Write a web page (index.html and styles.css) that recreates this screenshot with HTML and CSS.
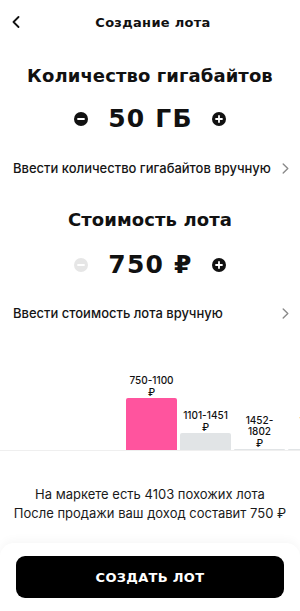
FILE: index.html
```html
<!DOCTYPE html>
<html lang="ru">
<head>
<meta charset="utf-8">
<link rel="stylesheet" href="styles.css">
</head>
<body>
<div class="screen">
  <header class="header">
    <button class="back" aria-label="Назад">
      <svg width="8" height="12" viewBox="0 0 8 12"><path d="M6.5 1 L1.5 6 L6.5 11" fill="none" stroke="#111" stroke-width="1.8" stroke-linecap="round" stroke-linejoin="round"/></svg>
    </button>
    <h1 class="title">Создание лота</h1>
    <span></span>
  </header>

  <h2 class="section-title first">Количество гигабайтов</h2>
  <div class="stepper">
    <span class="step-btn">
      <svg width="14" height="14" viewBox="0 0 14 14"><circle cx="7" cy="7" r="7" fill="#111"/><path d="M4 7 H10" stroke="#fff" stroke-width="1.8" stroke-linecap="round"/></svg>
    </span>
    <span class="value">50 ГБ</span>
    <span class="step-btn">
      <svg width="14" height="14" viewBox="0 0 14 14"><circle cx="7" cy="7" r="7" fill="#111"/><path d="M4 7 H10 M7 4 V10" stroke="#fff" stroke-width="1.8" stroke-linecap="round"/></svg>
    </span>
  </div>
  <div class="link-row">
    <span>Ввести количество гигабайтов вручную</span>
    <svg class="chev" width="7" height="11" viewBox="0 0 7 11"><path d="M1.2 1 L5.8 5.5 L1.2 10" fill="none" stroke="#8a8a8a" stroke-width="1.4" stroke-linecap="round" stroke-linejoin="round"/></svg>
  </div>

  <h2 class="section-title second">Стоимость лота</h2>
  <div class="stepper price">
    <span class="step-btn">
      <svg width="14" height="14" viewBox="0 0 14 14"><circle cx="7" cy="7" r="7" fill="#e6e6e6"/><path d="M4 7 H10" stroke="#fff" stroke-width="1.8" stroke-linecap="round"/></svg>
    </span>
    <span class="value">750 ₽</span>
    <span class="step-btn">
      <svg width="14" height="14" viewBox="0 0 14 14"><circle cx="7" cy="7" r="7" fill="#111"/><path d="M4 7 H10 M7 4 V10" stroke="#fff" stroke-width="1.8" stroke-linecap="round"/></svg>
    </span>
  </div>
  <div class="link-row second">
    <span>Ввести стоимость лота вручную</span>
    <svg class="chev" width="7" height="11" viewBox="0 0 7 11"><path d="M1.2 1 L5.8 5.5 L1.2 10" fill="none" stroke="#8a8a8a" stroke-width="1.4" stroke-linecap="round" stroke-linejoin="round"/></svg>
  </div>

  <div class="chart">
    <div class="col">
      <div class="label">750-1100<br>₽</div>
      <div class="bar active" style="height:52px"></div>
    </div>
    <div class="col">
      <div class="label">1101-1451<br>₽</div>
      <div class="bar" style="height:17px"></div>
    </div>
    <div class="col">
      <div class="label">1452-<br>1802<br>₽</div>
      <div class="bar" style="height:1px"></div>
    </div>
    <div class="col">
      <div class="label">1803-<br>2153<br>₽</div>
      <div class="bar" style="height:1px"></div>
    </div>
  </div>

  <div class="info">
    <p>На маркете есть 4103 похожих лота</p>
    <p>После продажи ваш доход составит 750 ₽</p>
  </div>

  <footer class="footer">
    <button class="cta">СОЗДАТЬ ЛОТ</button>
  </footer>
</div>
</body>
</html>
```

FILE: styles.css
```css
* { box-sizing: border-box; }
html, body { margin: 0; padding: 0; background: #fff; }
body {
  font-family: "Inter", "Noto Sans", sans-serif;
  color: #111;
  width: 300px;
  height: 611px;
  overflow: hidden;
}
.screen {
  display: flex;
  flex-direction: column;
  height: 611px;
}
.header {
  height: 40px;
  display: grid;
  grid-template-columns: 36px 1fr 36px;
  align-items: center;
}
.back {
  background: none;
  border: 0;
  padding: 0 0 0 12px;
  height: 40px;
  display: flex;
  align-items: center;
}
.title {
  margin: 0;
  text-align: center;
  font-family: "DejaVu Sans", sans-serif;
  font-weight: 700;
  font-size: 13px;
  line-height: 40px;
  padding-top: 3px;
  letter-spacing: 0.3px;
  padding-left: 6px;
}
.section-title {
  margin: 0;
  text-align: center;
  font-family: "DejaVu Sans", sans-serif;
  font-weight: 700;
  font-size: 18px;
  line-height: 24px;
  letter-spacing: 0.1px;
}
.section-title.first { margin-top: 24px; }
.section-title.second { margin-top: 30px; }
.stepper {
  display: flex;
  justify-content: center;
  align-items: center;
  height: 28px;
  margin-top: 17px;
  gap: 16px;
}
.stepper.price { margin-top: 19px; }
.step-btn { display: flex; width: 14px; height: 14px; }
.value {
  font-family: "DejaVu Sans", sans-serif;
  font-weight: 700;
  font-size: 25px;
  line-height: 28px;
  letter-spacing: 1.2px;
  min-width: 92px;
  padding-left: 1px;
  text-align: center;
}
.link-row {
  display: flex;
  justify-content: space-between;
  align-items: center;
  height: 20px;
  margin-top: 25px;
  padding: 0 13px;
  font-size: 13px;
  font-weight: 500;
  color: #151515;
}
.link-row.second { margin-top: 24px; }
.chev { margin-right: -2px; }
.chart {
  height: 128px;
  display: flex;
  align-items: flex-end;
  gap: 3px;
  padding-left: 126px;
  border-bottom: 1px solid #efefef;
  overflow: hidden;
}
.col {
  flex: 0 0 51px;
  display: flex;
  flex-direction: column;
  align-items: center;
}
.label {
  font-size: 10px;
  line-height: 11.5px;
  font-weight: 500;
  text-align: center;
  color: #111;
  margin-bottom: 0;
  white-space: nowrap;
}
.bar {
  width: 51px;
  background: #e1e4e6;
  border-radius: 2px 2px 0 0;
}
.bar.active { background: #ff549e; }
.info {
  margin-top: 34px;
  text-align: center;
  font-size: 13px;
  line-height: 19px;
  color: #1a1a1a;
}
.info p { margin: 0; }
.footer {
  margin-top: auto;
  height: 68px;
  padding: 13px 16px;
  background: #fff;
  border-radius: 14px 14px 0 0;
  box-shadow: 0 -3px 10px rgba(0,0,0,0.035);
}
.cta {
  width: 100%;
  height: 42px;
  border: 0;
  border-radius: 9px;
  background: #000;
  color: #fff;
  font-family: "DejaVu Sans", sans-serif;
  font-weight: 700;
  font-size: 13px;
  letter-spacing: 0.3px;
}
```
